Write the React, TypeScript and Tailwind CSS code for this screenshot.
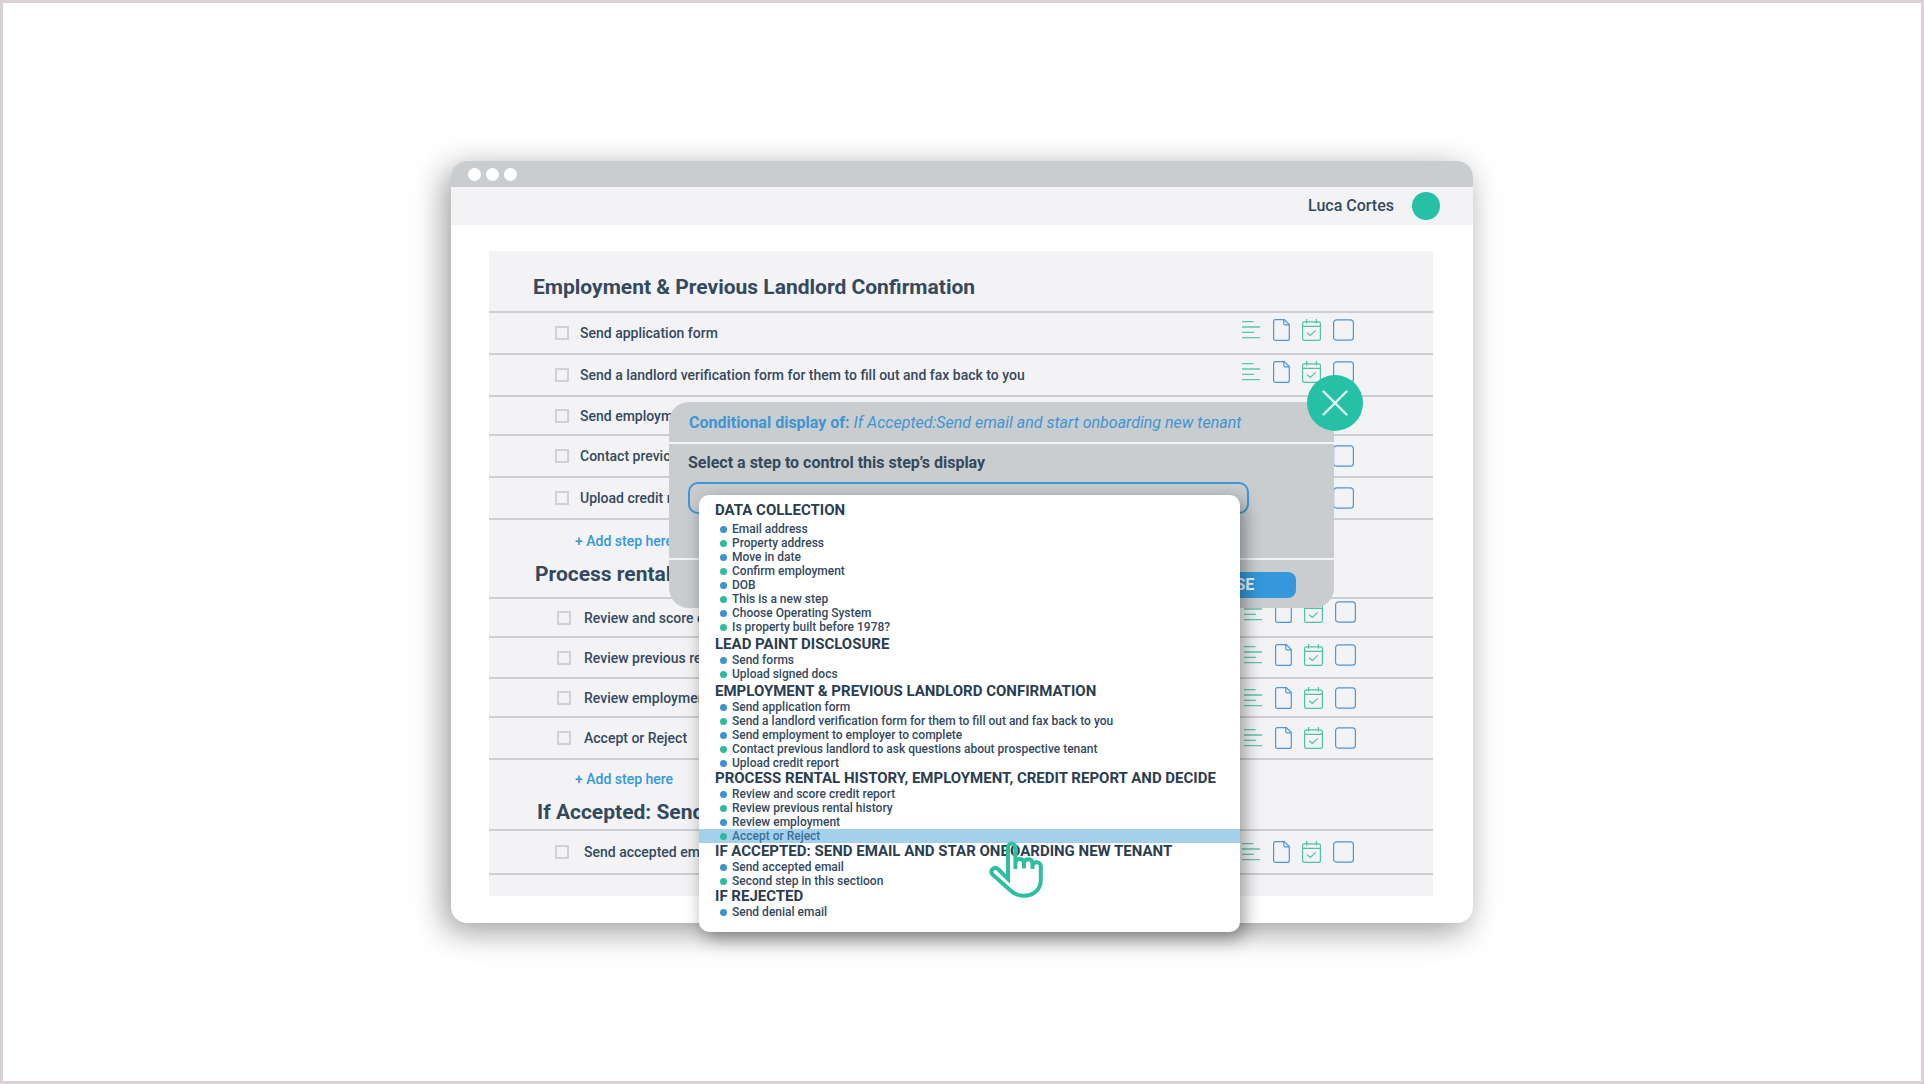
import type { ReactNode } from "react";
import { clsx } from "clsx";

type Step = { label: string; height: string; icons?: "center" | "upper" | "top" };

function IconButton({ label, children }: { label: string; children: ReactNode }) {
  return (
    <button type="button" aria-label={label} className="block shrink-0">
      {children}
    </button>
  );
}

function StepIcons({ step }: { step: string }) {
  return (
    <div className="flex items-center">
      <IconButton label={`Description for ${step}`}>
        <svg className="mr-3 h-[22px] w-[19px]" viewBox="0 0 19 22" fill="none" stroke="#5cc6a6" strokeWidth="1.3">
          <path d="M0 2.7H11.5M0 8H18M0 13.3H12M0 18.7H18" />
        </svg>
      </IconButton>
      <IconButton label={`Files for ${step}`}>
        <svg className="mr-3 h-[22px] w-[17px]" viewBox="0 0 17 22" fill="none" stroke="#4e96d6" strokeWidth="1.2">
          <path d="M2.6 0.6H11.3L16.3 5.6V19.4Q16.3 21.4 14.3 21.4H2.6Q0.6 21.4 0.6 19.4V2.6Q0.6 0.6 2.6 0.6Z" />
          <path d="M10.8 0.8V4.2Q10.8 5.8 12.4 5.8H16.2" />
        </svg>
      </IconButton>
      <IconButton label={`Due date for ${step}`}>
        <svg className="mr-3 h-[22px] w-[19px]" viewBox="0 0 19 22" fill="none" stroke="#4fc3a0" strokeWidth="1.2">
          <rect x="0.6" y="2.8" width="17.8" height="18.6" rx="1.6" />
          <path d="M0.6 7.4H18.4M4.6 0V4.6M14.4 0V4.6M5.2 13.8L8.3 16.4L13.8 11.4" />
        </svg>
      </IconButton>
      <IconButton label={`Conditions for ${step}`}>
        <svg className="h-[22px] w-[21px]" viewBox="0 0 21 22" fill="none" stroke="#4e96d6" strokeWidth="1.2">
          <rect x="0.6" y="0.8" width="19.8" height="20.4" rx="3" />
        </svg>
      </IconButton>
    </div>
  );
}

function StepRow({ step }: { step: Step }) {
  return (
    <li className={clsx("flex items-center border-b-2 border-[#cccfd2]", step.height)}>
      <label className="flex grow items-center text-sm font-medium">
        <input type="checkbox" className="size-3.5 shrink-0 appearance-none border-2 border-[#cfd1d3] bg-transparent" />
        <span>{step.label}</span>
      </label>
      {step.icons && (
        <div
          className={clsx(
            step.icons === "upper" && "self-start pt-1.5",
            step.icons === "top" && "self-start pt-0.5",
          )}
        >
          <StepIcons step={step.label} />
        </div>
      )}
    </li>
  );
}

function Section({
  title,
  titleClass,
  listClass,
  steps,
}: {
  title: string;
  titleClass: string;
  listClass: string;
  steps: Step[];
}) {
  return (
    <section>
      <h2 className={clsx("border-b-2 border-[#cccfd2] text-[21px] leading-6 font-bold", titleClass)}>{title}</h2>
      <ul className={listClass}>
        {steps.map((s) => (
          <StepRow key={s.label} step={s} />
        ))}
      </ul>
    </section>
  );
}

function AddStep({ className }: { className: string }) {
  return (
    <div className={clsx("pl-[86px]", className)}>
      <button type="button" className="block text-sm leading-5 font-medium text-[#3498db]">
        + Add step here
      </button>
    </div>
  );
}

const employment: Step[] = [
  { label: "Send application form", height: "h-[42px]", icons: "upper" },
  { label: "Send a landlord verification form for them to fill out and fax back to you", height: "h-[42px]", icons: "upper" },
  { label: "Send employment to employer to complete", height: "h-[39px]" },
  { label: "Contact previous landlord to ask questions", height: "h-[42px]", icons: "center" },
  { label: "Upload credit report", height: "h-[42px]", icons: "center" },
];

const processing: Step[] = [
  { label: "Review and score credit report", height: "h-[39px]", icons: "top" },
  { label: "Review previous rental history", height: "h-[41px]", icons: "upper" },
  { label: "Review employment", height: "h-[39px]", icons: "center" },
  { label: "Accept or Reject", height: "h-[42px]", icons: "center" },
];

const accepted: Step[] = [{ label: "Send accepted email", height: "h-[44px]", icons: "center" }];

const groups = [
  {
    title: "DATA COLLECTION",
    items: [
      "Email address",
      "Property address",
      "Move in date",
      "Confirm employment",
      "DOB",
      "This is a new step",
      "Choose Operating System",
      "Is property built before 1978?",
    ],
    className: "space-y-[3px] pb-0.5",
  },
  { title: "LEAD PAINT DISCLOSURE", items: ["Send forms", "Upload signed docs"], className: "pb-0.5" },
  {
    title: "EMPLOYMENT & PREVIOUS LANDLORD CONFIRMATION",
    items: [
      "Send application form",
      "Send a landlord verification form for them to fill out and fax back to you",
      "Send employment to employer to complete",
      "Contact previous landlord to ask questions about prospective tenant",
      "Upload credit report",
    ],
    className: "",
  },
  {
    title: "PROCESS RENTAL HISTORY, EMPLOYMENT, CREDIT REPORT AND DECIDE",
    items: ["Review and score credit report", "Review previous rental history", "Review employment", "Accept or Reject"],
    className: "",
  },
  {
    title: "IF ACCEPTED: SEND EMAIL AND STAR ONBOARDING NEW TENANT",
    items: ["Send accepted email", "Second step in this sectioon"],
    className: "",
  },
  { title: "IF REJECTED", items: ["Send denial email"], className: "" },
];

function StepMenu() {
  return (
    <div
      id="step-menu"
      className="absolute top-[93px] left-[30px] w-[541px] rounded-[10px] bg-white pt-[7px] pb-[13px] shadow-[4px_6px_18px_rgba(0,0,0,0.4)]"
    >
      {groups.map((g) => (
        <section key={g.title} className={g.className}>
          <h3 className="pl-4 text-[15px] leading-[17px] font-bold whitespace-nowrap text-[#2b3d50]">{g.title}</h3>
          <ul>
            {g.items.map((item, i) => (
              <li key={item}>
                <button
                  type="button"
                  className={clsx(
                    "flex w-full items-center gap-[5px] pl-[21px] text-left text-xs leading-[14px] font-medium whitespace-nowrap",
                    item === "Accept or Reject" ? "bg-[#a3d1ec] text-[#3b709a]" : "text-[#34495e]",
                  )}
                >
                  <span className={clsx("size-[7px] rounded-full", i % 2 === 0 ? "bg-[#3b93d1]" : "bg-[#2dbb9d]")} />
                  {item}
                </button>
              </li>
            ))}
          </ul>
        </section>
      ))}
      <svg
        className="pointer-events-none absolute top-[346px] left-[290px] h-[57px] w-[54px]"
        viewBox="0 0 54 57"
        fill="none"
        stroke="#2ebfa3"
        strokeWidth="4"
        aria-hidden="true"
      >
        <path d="M19 38V6.200a3.700 3.700 0 0 1 7.400 0V28V21.500a4.400 4.400 0 0 1 8.600 0V27.500V22a4.300 4.300 0 0 1 8.500 0V28V24.500a4.200 4.200 0 0 1 8.300 1V39C51.800 48 45 54.800 35 54.800C29 54.800 24.500 52.500 21 49L3.500 33.500C0.500 29.500 5 24.500 9.500 28.500Z" />
      </svg>
    </div>
  );
}

function ConditionDialog() {
  return (
    <div
      role="dialog"
      aria-label="Conditional display"
      className="absolute top-[241px] left-[218px] w-[665px] rounded-[20px] bg-[#c9cdd0]"
    >
      <h2 className="border-b-2 border-[#f1f3f5] pt-[9px] pb-[7px] pl-5 text-base font-bold text-[#3e95d2]">
        Conditional display of:{" "}
        <em className="font-normal">If Accepted:Send email and start onboarding new tenant</em>
      </h2>
      <div className="border-b-2 border-[#f1f3f5] pt-[7px] pb-[44px] pl-[19px]">
        <label htmlFor="control-step" className="block text-base font-bold text-[#34495e]">
          Select a step to control this step’s display
        </label>
        <input
          id="control-step"
          role="combobox"
          aria-expanded="true"
          aria-controls="step-menu"
          className="mt-[7px] block h-8 w-[561px] rounded-[10px] border-2 border-[#3f97d3] bg-transparent px-3"
        />
      </div>
      <div className="flex justify-end pt-3 pr-[38px] pb-[10px]">
        <button type="button" className="h-[26px] w-[132px] rounded-lg bg-[#3498db] text-base leading-[26px] font-bold text-[#eef6fc]">
          CLOSE
        </button>
      </div>
      <button
        type="button"
        aria-label="Close dialog"
        className="absolute -top-[27px] -right-[29px] flex size-14 items-center justify-center rounded-full bg-[#24c1a7]"
      >
        <svg className="size-7" viewBox="0 0 28 28" fill="none" stroke="#e6fff9" strokeWidth="2.4" strokeLinecap="round">
          <path d="M2.500 2.500L25.500 25.500M25.500 2.500L2.500 25.500" />
        </svg>
      </button>
      <StepMenu />
    </div>
  );
}

export default function App() {
  return (
    <div className="flex min-h-screen items-center justify-center border-[3px] border-[#d8d2d7] bg-white font-['Roboto',sans-serif] text-[#34495e]">
      <main className="relative w-full max-w-[1022px] rounded-2xl bg-white pb-[27px] shadow-[-6px_8px_32px_rgba(0,0,0,0.4)]">
        <div className="flex h-[26px] items-center gap-[5px] rounded-t-2xl bg-[#c9cdd0] pl-[17px]">
          <span className="size-[13px] rounded-full bg-white" />
          <span className="size-[13px] rounded-full bg-white" />
          <span className="size-[13px] rounded-full bg-white" />
        </div>
        <header className="flex h-[38px] items-center justify-end gap-[18px] bg-[#f3f3f5] pr-[33px]">
          <span className="text-base font-medium">Luca Cortes</span>
          <span className="size-7 rounded-full bg-[#24c1a7]" />
        </header>
        <div className="mt-[26px] mr-10 ml-[38px] bg-[#f3f3f5] pb-[21px]">
          <Section
            title="Employment & Previous Landlord Confirmation"
            titleClass="pt-6 pb-3 pl-11"
            listClass="[&_label]:gap-[11px] [&>li]:pr-[79px] [&>li]:pl-[66px]"
            steps={employment}
          />
          <AddStep className="pt-[11px]" />
          <Section
            title="Process rental history, employment, credit report"
            titleClass="pt-[11px] pb-[11px] pl-[46px]"
            listClass="[&_label]:gap-[13px] [&>li]:pr-[77px] [&>li]:pl-[68px]"
            steps={processing}
          />
          <AddStep className="pt-[9px]" />
          <Section
            title="If Accepted: Send email and start onboarding"
            titleClass="pt-[11px] pb-[5px] pl-12"
            listClass="[&_label]:gap-[15px] [&>li]:pr-[79px] [&>li]:pl-[66px]"
            steps={accepted}
          />
        </div>
        <ConditionDialog />
      </main>
    </div>
  );
}
